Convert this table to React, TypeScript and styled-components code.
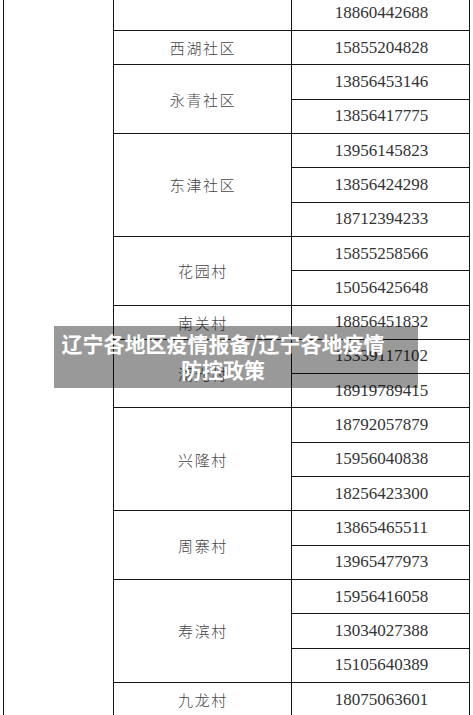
import styled, { createGlobalStyle } from "styled-components";

const GlobalStyle = createGlobalStyle`
  html, body {
    margin: 0;
    padding: 0;
    background: #fff;
  }
  body {
    width: 473px;
    height: 715px;
    overflow: hidden;
  }
`;

const ROW_HEIGHT = 34.32;

type Group = { name: string; phones: string[] };

const GROUPS: Group[] = [
  { name: "", phones: ["18860442688"] },
  { name: "西湖社区", phones: ["15855204828"] },
  { name: "永青社区", phones: ["13856453146", "13856417775"] },
  { name: "东津社区", phones: ["13956145823", "13856424298", "18712394233"] },
  { name: "花园村", phones: ["15855258566", "15056425648"] },
  { name: "南关村", phones: ["18856451832"] },
  { name: "湖光村", phones: ["13339117102", "18919789415"] },
  { name: "兴隆村", phones: ["18792057879", "15956040838", "18256423300"] },
  { name: "周寨村", phones: ["13865465511", "13965477973"] },
  { name: "寿滨村", phones: ["15956416058", "13034027388", "15105640389"] },
  { name: "九龙村", phones: ["18075063601"] },
];

const TOTAL_ROWS = GROUPS.reduce((n, g) => n + g.phones.length, 0);

const Page = styled.div`
  position: relative;
  width: 473px;
  height: 715px;
  overflow: hidden;
  padding-left: 2.5px;
  box-sizing: border-box;
`;

const Sheet = styled.table`
  border-collapse: collapse;
  table-layout: fixed;
  width: 466px;
  margin-top: -4.3px;
`;

const Col = styled.col<{ w: number }>`
  width: ${(p) => p.w}px;
`;

const Row = styled.tr`
  height: ${ROW_HEIGHT}px;
`;

const Cell = styled.td`
  border: 1.5px solid #151515;
  padding: 0;
  text-align: center;
  vertical-align: middle;
  color: #3a3a3a;
`;

const AreaCell = styled(Cell)``;

const NameCell = styled(Cell)`
  font-family: "Noto Sans CJK SC", "Liberation Serif", serif;
  font-weight: 300;
  font-size: 15px;
  letter-spacing: 1.6px;
  padding-left: 2px;
  color: #444;
`;

const PhoneCell = styled(Cell)`
  font-family: "Liberation Serif", "DejaVu Serif", serif;
  font-size: 17px;
  color: #333;
  padding-left: 3px;
`;

const Banner = styled.div`
  position: absolute;
  left: 54px;
  top: 326px;
  width: 364px;
  height: 62px;
  box-sizing: border-box;
  padding: 4px 27px 0 1px;
  background: rgba(0, 0, 0, 0.4);
  color: #fff;
  font-family: "Noto Sans CJK SC", "Noto Sans", sans-serif;
  font-weight: 700;
  font-size: 21px;
  line-height: 26px;
  text-align: center;
`;

export default function App() {
  return (
    <>
      <GlobalStyle />
      <Page>
        <Sheet>
          <colgroup>
            <Col w={110} />
            <Col w={178} />
            <Col w={178} />
          </colgroup>
          <tbody>
            {GROUPS.map((g, gi) =>
              g.phones.map((phone, pi) => (
                <Row key={phone}>
                  {gi === 0 && pi === 0 && <AreaCell rowSpan={TOTAL_ROWS} />}
                  {pi === 0 && <NameCell rowSpan={g.phones.length}>{g.name}</NameCell>}
                  <PhoneCell>{phone}</PhoneCell>
                </Row>
              ))
            )}
          </tbody>
        </Sheet>
        <Banner>辽宁各地区疫情报备/辽宁各地疫情防控政策</Banner>
      </Page>
    </>
  );
}
